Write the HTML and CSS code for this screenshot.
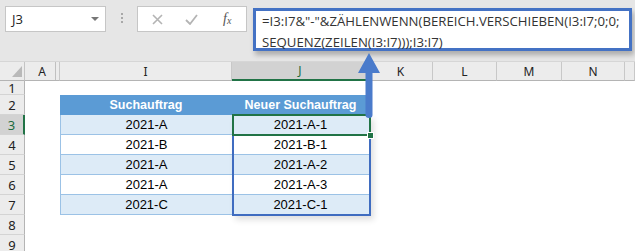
FILE: index.html
```html
<!DOCTYPE html>
<html>
<head>
  <meta charset="utf-8">
  <link rel="stylesheet" href="styles.css">
</head>
<body>
  <div class="toolbar">
    <div class="name-box">
      <span>J3</span>
      <span class="caret"></span>
    </div>
    <div class="grip"><i></i><i></i><i></i></div>
    <div class="fx-buttons">
      <svg class="btn-cross" width="11" height="11" viewBox="0 0 11 11">
        <path d="M1 1 L10 10 M10 1 L1 10" stroke="#b4b4b4" stroke-width="1.6" fill="none"/>
      </svg>
      <svg class="btn-check" width="13" height="11" viewBox="0 0 13 11">
        <path d="M1 6 L5 10 L12 1" stroke="#b4b4b4" stroke-width="1.8" fill="none"/>
      </svg>
      <span class="fx">f<sub>x</sub></span>
    </div>
    <div class="formula">
      <div>=I3:I7&amp;"-"&amp;ZÄHLENWENN(BEREICH.VERSCHIEBEN(I3:I7;0;0;</div>
      <div>SEQUENZ(ZEILEN(I3:I7)));I3:I7)</div>
    </div>
  </div>

  <div class="sheet">
    <!-- column headers -->
    <div class="corner"><span class="corner-tri"></span></div>
    <div class="ch ch-a">A</div>
    <div class="ch">I</div>
    <div class="ch sel">J</div>
    <div class="ch">K</div>
    <div class="ch">L</div>
    <div class="ch">M</div>
    <div class="ch">N</div>
    <div class="ch"></div>

    <!-- row 1 -->
    <div class="rh">1</div>
    <div class="c"></div><div class="c"></div><div class="c"></div><div class="c"></div>
    <div class="c"></div><div class="c"></div><div class="c"></div><div class="c"></div>

    <!-- row 2 -->
    <div class="rh">2</div>
    <div class="c"></div>
    <div class="th">Suchauftrag</div>
    <div class="th">Neuer Suchauftrag</div>
    <div class="c"></div><div class="c"></div><div class="c"></div><div class="c"></div><div class="c"></div>

    <!-- row 3 -->
    <div class="rh sel">3</div>
    <div class="c"></div>
    <div class="t alt">2021-A</div>
    <div class="tj alt first">
      2021-A-1
      <div class="spill"></div>
      <div class="active"><span class="handle"></span></div>
    </div>
    <div class="c"></div><div class="c"></div><div class="c"></div><div class="c"></div><div class="c"></div>

    <!-- row 4 -->
    <div class="rh">4</div>
    <div class="c"></div>
    <div class="t">2021-B</div>
    <div class="tj">2021-B-1</div>
    <div class="c"></div><div class="c"></div><div class="c"></div><div class="c"></div><div class="c"></div>

    <!-- row 5 -->
    <div class="rh">5</div>
    <div class="c"></div>
    <div class="t alt">2021-A</div>
    <div class="tj alt">2021-A-2</div>
    <div class="c"></div><div class="c"></div><div class="c"></div><div class="c"></div><div class="c"></div>

    <!-- row 6 -->
    <div class="rh">6</div>
    <div class="c"></div>
    <div class="t">2021-A</div>
    <div class="tj">2021-A-3</div>
    <div class="c"></div><div class="c"></div><div class="c"></div><div class="c"></div><div class="c"></div>

    <!-- row 7 -->
    <div class="rh">7</div>
    <div class="c"></div>
    <div class="t alt">2021-C</div>
    <div class="tj alt">2021-C-1</div>
    <div class="c"></div><div class="c"></div><div class="c"></div><div class="c"></div><div class="c"></div>

    <!-- row 8, 9 -->
    <div class="rh">8</div>
    <div class="c"></div><div class="c"></div><div class="c"></div><div class="c"></div>
    <div class="c"></div><div class="c"></div><div class="c"></div><div class="c"></div>
    <div class="rh">9</div>
    <div class="c"></div><div class="c"></div><div class="c"></div><div class="c"></div>
    <div class="c"></div><div class="c"></div><div class="c"></div><div class="c"></div>
  </div>

  <svg class="arrow" width="26" height="68" viewBox="0 0 26 68">
    <path d="M13 1 L24 21 L16.5 21 L16.5 63 Q16.5 66 13 66 Q9.5 66 9.5 63 L9.5 21 L2 21 Z" fill="#4a7bcb"/>
  </svg>
</body>
</html>
```

FILE: styles.css
```css
body {
  margin: 0;
  width: 635px;
  height: 251px;
  overflow: hidden;
  background: #ffffff;
  font-family: "Liberation Sans", Arial, sans-serif;
  position: relative;
}

/* formula bar area */
.toolbar {
  display: flex;
  align-items: flex-start;
  height: 62px;
  box-sizing: border-box;
  padding: 6px 0 0 5px;
  background: #e6e6e6;
  border-bottom: 1px solid #d6d6d6;
}

.name-box {
  display: flex;
  align-items: center;
  justify-content: space-between;
  width: 101px;
  height: 26px;
  box-sizing: border-box;
  padding: 0 6px 0 6px;
  background: #ffffff;
  border: 1px solid #c6c6c6;
  font-family: "Open Sans", sans-serif;
  font-size: 13px;
  color: #222;
}

.caret {
  width: 0;
  height: 0;
  border-left: 4px solid transparent;
  border-right: 4px solid transparent;
  border-top: 4px solid #777;
}

.grip {
  display: flex;
  flex-direction: column;
  align-items: center;
  gap: 2px;
  width: 31px;
  padding-top: 7px;
}

.grip i {
  width: 2px;
  height: 2px;
  background: #a8a8a8;
}

.fx-buttons {
  display: flex;
  align-items: center;
  width: 110px;
  height: 26px;
  box-sizing: border-box;
  padding-left: 14px;
  background: #ffffff;
  border: 1px solid #c6c6c6;
}

.btn-check {
  margin-left: 22px;
}

.fx {
  margin-left: 25px;
  font-family: "Liberation Serif", serif;
  font-style: italic;
  font-size: 14px;
  color: #555;
}

.fx sub {
  font-size: 10px;
  vertical-align: -1px;
}

.formula {
  width: 379px;
  height: 43px;
  box-sizing: border-box;
  margin: 2px 0 0 6px;
  padding: 0 0 0 6px;
  background: #ffffff;
  border: 3px solid #4472c4;
  box-shadow: 2px 4px 5px rgba(0, 0, 0, 0.25);
  font-family: "Open Sans", sans-serif;
  font-size: 13.2px;
  line-height: 21px;
  color: #333;
  white-space: nowrap;
}

/* worksheet */
.sheet {
  display: grid;
  grid-template-columns: 25px 35px 172px 137px 64px 64px 65px 63px 1fr;
  grid-template-rows: 19px 14px repeat(8, 20px);
}

.corner,
.ch,
.rh {
  background: #ececec;
  font-family: "Noto Sans", sans-serif;
  font-size: 12px;
  color: #222;
  display: flex;
  align-items: center;
  justify-content: center;
}

.corner {
  justify-content: flex-end;
  align-items: flex-end;
  padding: 0 2px 3px 0;
  border-right: 1px solid #c4c4c4;
  border-bottom: 1px solid #b4b4b4;
}

.corner-tri {
  width: 0;
  height: 0;
  border-left: 10px solid transparent;
  border-bottom: 11px solid #b9b9b9;
}

.ch {
  border-right: 1px solid #c8c8c8;
  border-bottom: 1px solid #b4b4b4;
}

.ch-a {
  box-shadow: inset -3px 0 0 #ececec, inset -4px 0 0 #c0c0c0;
}

.ch.sel {
  background: #d2d2d2;
  color: #1d6b3e;
  border-bottom: 2px solid #217346;
}

.rh {
  border-right: 1px solid #b4b4b4;
  border-bottom: 1px solid #d4d4d4;
  font-size: 13px;
}

.rh.sel {
  background: #d2d2d2;
  color: #1d6b3e;
  border-right: 2px solid #217346;
}

.c {
  background: #ffffff;
}

.th,
.t,
.tj {
  display: flex;
  align-items: center;
  justify-content: center;
  font-size: 13px;
  color: #000;
}

.th {
  background: #5b9bd5;
  color: #ffffff;
  font-weight: bold;
  font-size: 12.5px;
}

.t {
  border-left: 1px solid #9bc2e6;
  border-bottom: 1px solid #9bc2e6;
}

.tj {
  border-bottom: 1px solid #9bc2e6;
}

.tj.first {
  position: relative;
}

.alt {
  background: #ddebf7;
}

/* outline of the spilled range J3:J7 */
.spill {
  position: absolute;
  left: 0;
  top: 0;
  width: 139px;
  height: 101px;
  box-sizing: border-box;
  border: 2px solid #3f6cc0;
  border-top: none;
  box-shadow: 3px 4px 6px rgba(0, 0, 0, 0.12);
  pointer-events: none;
}

.active {
  position: absolute;
  left: 0;
  top: -1px;
  width: 139px;
  height: 22px;
  box-sizing: border-box;
  border: 2px solid #217346;
}

.handle {
  position: absolute;
  right: -5px;
  bottom: -5px;
  width: 5px;
  height: 5px;
  background: #217346;
  border: 1px solid #ffffff;
}

.arrow {
  position: absolute;
  left: 356px;
  top: 52px;
}
```
